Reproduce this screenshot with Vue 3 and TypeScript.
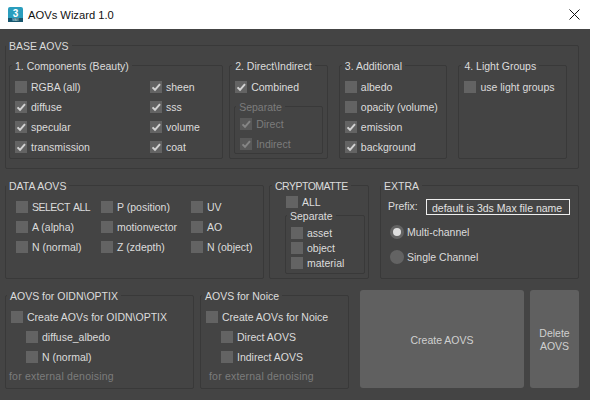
<script setup lang="ts">
interface Opt {
  text: string
  on?: boolean
}

const beauty: Opt[] = [
  { text: 'RGBA (all)' },
  { text: 'sheen', on: true },
  { text: 'diffuse', on: true },
  { text: 'sss', on: true },
  { text: 'specular', on: true },
  { text: 'volume', on: true },
  { text: 'transmission', on: true },
  { text: 'coat', on: true },
]
const additional: Opt[] = [
  { text: 'albedo' },
  { text: 'opacity (volume)' },
  { text: 'emission', on: true },
  { text: 'background', on: true },
]
const separate: Opt[] = [
  { text: 'Direct', on: true },
  { text: 'Indirect', on: true },
]
const dataAovs: Opt[] = [
  { text: 'SELECT ALL' },
  { text: 'P (position)' },
  { text: 'UV' },
  { text: 'A (alpha)' },
  { text: 'motionvector' },
  { text: 'AO' },
  { text: 'N (normal)' },
  { text: 'Z (zdepth)' },
  { text: 'N (object)' },
]
const crypto: Opt[] = [{ text: 'asset' }, { text: 'object' }, { text: 'material' }]
const denoise = [
  {
    title: 'AOVS for OIDN\\OPTIX',
    main: 'Create AOVs for OIDN\\OPTIX',
    subs: ['diffuse_albedo', 'N (normal)'],
    cls: 'oidn',
  },
  {
    title: 'AOVS for Noice',
    main: 'Create AOVs for Noice',
    subs: ['Direct AOVS', 'Indirect AOVS'],
    cls: 'noice',
  },
]
</script>

<template>
  <div class="window">
    <header class="titlebar">
      <svg class="app-icon" width="15" height="15" viewBox="0 0 15 15">
        <rect x="0" y="0" width="15" height="15" rx="2" fill="#2a9dbd" />
        <rect x="0" y="11" width="15" height="4" fill="#17566e" />
        <text x="7.5" y="9.6" text-anchor="middle" font-size="10" font-weight="700" fill="#fff">3</text>
        <text x="7.5" y="14.2" text-anchor="middle" font-size="3" fill="#cfe3ea">MAX</text>
      </svg>
      <span class="app-title">AOVs Wizard 1.0</span>
      <svg class="close" width="11" height="11" viewBox="0 0 11 11">
        <path d="M0.5 0.5L10.5 10.5M10.5 0.5L0.5 10.5" stroke="#111" stroke-width="1" fill="none" />
      </svg>
    </header>

    <main class="panel">
      <section class="group base">
        <div class="title flush">BASE AOVS</div>
        <div class="base-row">
          <section class="group beauty">
            <div class="title">1. Components (Beauty)</div>
            <div class="opts">
              <label v-for="o in beauty" :key="o.text" class="opt">
                <span class="box">
                  <svg v-if="o.on" width="12" height="12" viewBox="0 0 12 12"><path d="M2.5 6.4L5 8.8L10 3.2" fill="none" stroke="currentColor" stroke-width="2" /></svg>
                </span>
                {{ o.text }}
              </label>
            </div>
          </section>

          <section class="group direct">
            <div class="title">2. Direct\Indirect</div>
            <label class="opt">
              <span class="box">
                <svg width="12" height="12" viewBox="0 0 12 12"><path d="M2.5 6.4L5 8.8L10 3.2" fill="none" stroke="currentColor" stroke-width="2" /></svg>
              </span>
              Combined
            </label>
            <section class="group separate disabled">
              <div class="title">Separate</div>
              <label v-for="o in separate" :key="o.text" class="opt">
                <span class="box">
                  <svg width="12" height="12" viewBox="0 0 12 12"><path d="M2.5 6.4L5 8.8L10 3.2" fill="none" stroke="currentColor" stroke-width="2" /></svg>
                </span>
                {{ o.text }}
              </label>
            </section>
          </section>

          <section class="group additional">
            <div class="title">3. Additional</div>
            <label v-for="o in additional" :key="o.text" class="opt">
              <span class="box">
                <svg v-if="o.on" width="12" height="12" viewBox="0 0 12 12"><path d="M2.5 6.4L5 8.8L10 3.2" fill="none" stroke="currentColor" stroke-width="2" /></svg>
              </span>
              {{ o.text }}
            </label>
          </section>

          <section class="group additional">
            <div class="title">4. Light Groups</div>
            <label class="opt"><span class="box"></span>use light groups</label>
          </section>
        </div>
      </section>

      <div class="row mid">
        <section class="group data">
          <div class="title flush">DATA AOVS</div>
          <div class="data-opts">
            <label v-for="o in dataAovs" :key="o.text" class="opt"><span class="box"></span>{{ o.text }}</label>
          </div>
        </section>

        <section class="group crypto">
          <div class="title">CRYPTOMATTE</div>
          <label class="opt tight all"><span class="box"></span>ALL</label>
          <section class="group crypto-sep">
            <div class="title">Separate</div>
            <label v-for="o in crypto" :key="o.text" class="opt tight"><span class="box"></span>{{ o.text }}</label>
          </section>
        </section>

        <section class="group extra">
          <div class="title flush">EXTRA</div>
          <div class="prefix">
            <span>Prefix:</span>
            <input class="prefix-input" type="text" value="default is 3ds Max file name" />
          </div>
          <label class="radio"><span class="dot selected"></span>Multi-channel</label>
          <label class="radio"><span class="dot"></span>Single Channel</label>
        </section>
      </div>

      <div class="row bottom">
        <section v-for="g in denoise" :key="g.cls" class="group" :class="g.cls">
          <div class="title">{{ g.title }}</div>
          <label class="opt"><span class="box"></span>{{ g.main }}</label>
          <label v-for="s in g.subs" :key="s" class="opt sub"><span class="box"></span>{{ s }}</label>
          <div class="note">for external denoising</div>
        </section>
        <button class="btn create">Create AOVS</button>
        <button class="btn delete">Delete AOVS</button>
      </div>
    </main>
  </div>
</template>

<style scoped>
.window {
  width: 590px;
  height: 400px;
  display: flex;
  flex-direction: column;
  overflow: hidden;
  background: #fff;
  font-family: "Liberation Sans", Arial, sans-serif;
  font-size: 10.5px;
  color: #dcdcdc;
}

.titlebar {
  height: 29px;
  flex: none;
  display: flex;
  align-items: center;
  padding: 0 10px 0 8px;
  color: #111;
  font-size: 11.2px;
}

.app-title {
  margin-left: 5px;
  flex: 1;
}

.panel {
  flex: 1;
  padding: 16px 0 0 5px;
  background: #444;
}

.group {
  box-sizing: border-box;
  border: 1px solid #393939;
  border-radius: 2px;
}

.title {
  width: fit-content;
  height: 14px;
  line-height: 14px;
  margin: -7px 0 0 -3px;
  padding: 0 3px;
  background: #444;
  white-space: nowrap;
}

.title.flush {
  margin-left: 0;
}

.base {
  width: 574px;
  height: 124px;
}

.base-row {
  display: flex;
  margin: 12px 0 0 3px;
}

.beauty,
.direct,
.additional {
  height: 94px;
  padding-left: 5px;
}

.beauty {
  width: 215px;
  margin-right: 6px;
}

.direct {
  width: 99px;
  margin-right: 11px;
}

.additional {
  width: 109px;
  margin-right: 11px;
}

.opts {
  display: grid;
  grid-template-columns: 135px 1fr;
}

.opt {
  display: flex;
  align-items: center;
  height: 20px;
  white-space: nowrap;
}

.opts,
.direct > .opt:first-of-type,
.additional > .opt:first-of-type {
  margin-top: 4px;
}

.box {
  width: 12px;
  height: 12px;
  flex: none;
  margin-right: 4px;
  background: #636363;
  color: #d2d2d2;
}

.box svg {
  display: block;
}

.separate {
  width: 89px;
  height: 48px;
  margin: 9px 0 0 -1px;
  padding-left: 5px;
  color: #7c7c7c;
}

.separate .title {
  margin-left: -4px;
}

.disabled .box {
  background: #595959;
  color: #858585;
}

.row {
  display: flex;
}

.mid {
  margin-top: 16px;
}

.data,
.crypto,
.extra,
.oidn,
.noice {
  height: 94px;
}

.data {
  width: 259px;
  margin-right: 5px;
}

.data-opts {
  display: grid;
  grid-template-columns: 85px 90px 1fr;
  margin: 4px 0 0 10px;
}

.data-opts .opt:first-child {
  letter-spacing: -0.5px;
  word-spacing: 1.5px;
}

.crypto {
  width: 100px;
  margin-right: 11px;
  padding-left: 16px;
}

.crypto > .title {
  margin-left: -14px;
  letter-spacing: -0.5px;
}

.tight {
  height: 15px;
}

.all {
  margin-top: 1px;
}

.crypto-sep {
  width: 80px;
  height: 59px;
  margin: 6px 0 0 -1px;
  padding-left: 5px;
}

.crypto-sep .title {
  margin: -7px 0 2px -4px;
}

.extra {
  width: 199px;
}

.extra .title {
  margin-left: 0;
}

.prefix {
  display: flex;
  align-items: center;
  justify-content: space-between;
  margin: 6px 8px 0 7px;
}

.prefix span {
  margin-top: -3px;
}

.prefix-input {
  box-sizing: border-box;
  width: 144px;
  height: 16px;
  padding: 1px 5px 0;
  border: 1px solid #eee;
  outline: none;
  background: #444;
  color: #e2e2e2;
  font: inherit;
}

.radio {
  display: flex;
  align-items: center;
  height: 25px;
  margin-left: 9px;
  white-space: nowrap;
}

.prefix + .radio {
  margin-top: 4px;
}

.dot {
  box-sizing: border-box;
  width: 14px;
  height: 14px;
  margin-right: 3px;
  border-radius: 50%;
  background: #636363;
}

.dot.selected {
  border: 3px solid #636363;
  background: #dedede;
}

.bottom {
  margin-top: 11px;
  align-items: flex-end;
}

.oidn {
  width: 189px;
  margin-right: 6px;
  padding-left: 5px;
}

.noice {
  width: 149px;
  margin-right: 11px;
  padding-left: 5px;
}

.oidn .title,
.noice .title {
  margin-left: -4px;
  margin-bottom: 4px;
}

.sub {
  margin-left: 15px;
}

.note {
  margin: 1px 0 0 -2px;
  line-height: 16px;
  letter-spacing: 0.2px;
  color: #7c7c7c;
}

.noice .note {
  margin-left: 3px;
}

.btn {
  height: 98px;
  margin-bottom: 1px;
  padding: 2px 4px 0;
  border: none;
  border-radius: 3px;
  background: #606060;
  color: #d0d0d0;
  font: inherit;
  line-height: 13px;
}

.create {
  width: 164px;
  margin-right: 6px;
}

.delete {
  width: 49px;
}
</style>
